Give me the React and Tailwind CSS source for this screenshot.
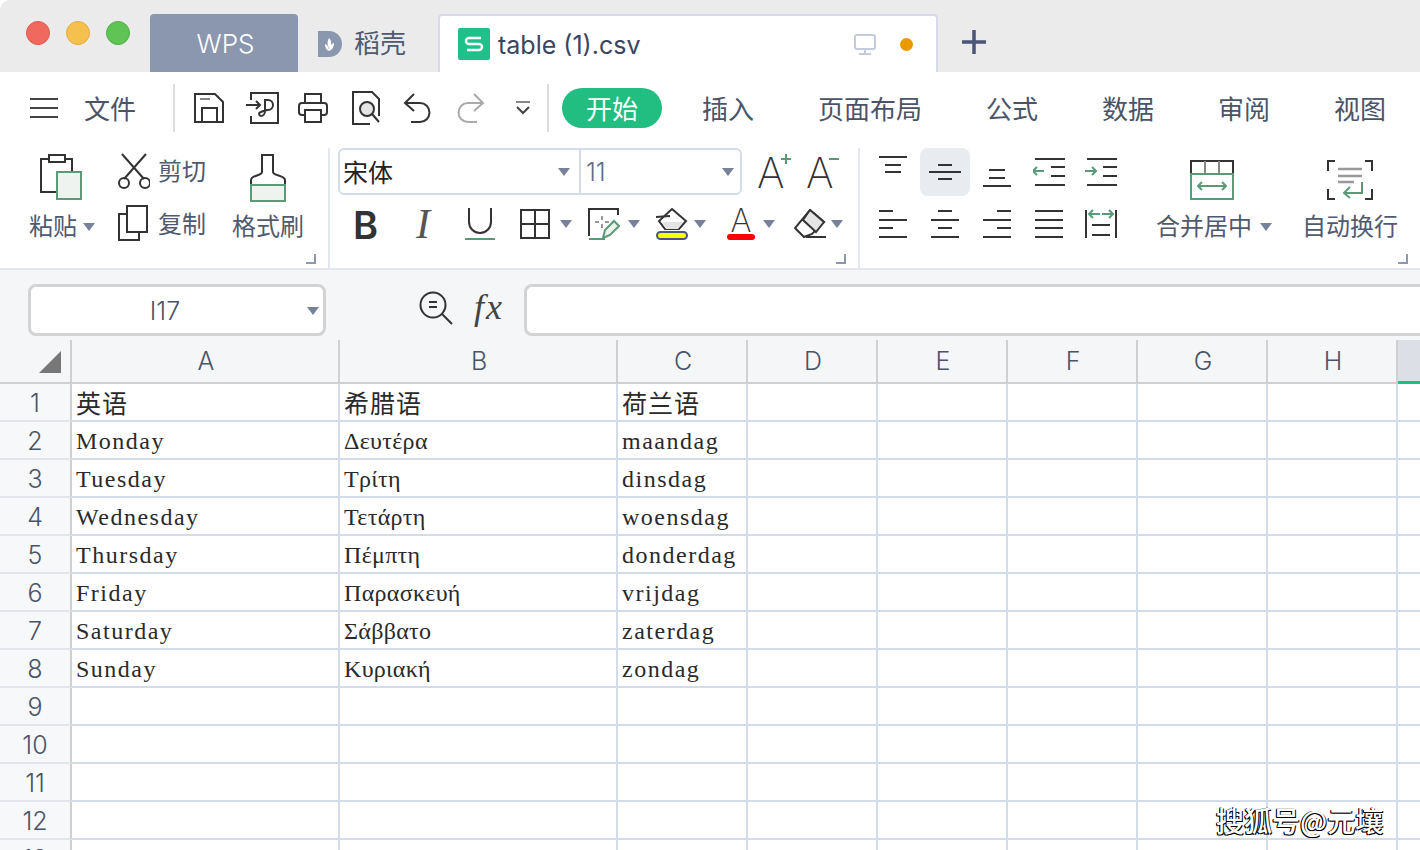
import React from 'react';

const SANS = "font-['Inter','Noto_Sans_CJK_SC',sans-serif]";
const DARK = '#333';
const GREEN = '#5a9a76';

const Ico = ({ w, h, className = '', children }) => (
  <svg width={w} height={h} viewBox={`0 0 ${w} ${h}`} fill="none" stroke={DARK} strokeWidth="2" className={`shrink-0 ${className}`}>
    {children}
  </svg>
);

const Caret = ({ className = '' }) => (
  <svg width="12" height="8" viewBox="0 0 12 8" className={`shrink-0 ${className}`}>
    <path d="M0 0h12L6 8z" fill="#77829a" />
  </svg>
);

const Corner = () => (
  <svg width="10" height="10" viewBox="0 0 10 10" fill="none" stroke="#8b97ae" strokeWidth="2" className="absolute right-[12px] bottom-[4px]">
    <path d="M9 0v9H0" />
  </svg>
);

// horizontal lines for the align icons: [x1, x2, y]
const Lines = ({ w, h, rows, children }) => (
  <Ico w={w} h={h}>
    {rows.map(([a, b, y], i) => (
      <path key={i} d={`M${a} ${y}H${b}`} />
    ))}
    {children}
  </Ico>
);

const TabLabel = ({ children }) => <span className="mt-[3px] text-[26px] leading-none text-[#4a5468]">{children}</span>;

const TitleBar = () => (
  <div className="flex h-[72px] items-end bg-[#ebebeb] rounded-tl-[10px]">
    <div className="flex h-[72px] w-[150px] items-center gap-[16px] pl-[26px] pb-[6px]">
      <span className="h-[24px] w-[24px] rounded-full border border-[#e0584e] bg-[#f0695e]" />
      <span className="h-[24px] w-[24px] rounded-full border border-[#e5ab3d] bg-[#f6c04f]" />
      <span className="h-[24px] w-[24px] rounded-full border border-[#4fb045] bg-[#5fc454]" />
    </div>
    <div className="flex h-[58px] w-[148px] items-center justify-center rounded-t-[4px] bg-[#8b97ae] pl-[3px] pt-[2px] text-[26px] font-light leading-none text-white">WPS</div>
    <div className="flex h-[58px] w-[140px] items-center gap-[12px] pl-[20px] pt-[1px]">
      <svg width="24" height="28" viewBox="0 0 24 28">
        <path d="M0 1h11a13 13 0 0 1 0 26H0z" fill="#8b97ae" />
        <path d="M11 8c3 3 3 7 0 10-2-3-2-7 0-10zM7 14c3 1 4 4 4 7-3-1-4-4-4-7zM16 13c0 4-2 7-5 8 0-4 2-7 5-8z" fill="#fff" />
      </svg>
      <span className="text-[26px] leading-none text-[#4f5a72]">稻壳</span>
    </div>
    <div className="flex h-[58px] w-[500px] items-center rounded-t-[4px] border-x-2 border-t-2 border-[#d5dbe8] border-b-0 bg-white pl-[18px]">
      <svg width="32" height="32" viewBox="0 0 32 32" className="shrink-0">
        <rect width="32" height="32" rx="2" fill="#1fc08a" />
        <path d="M23 10H11a3 3 0 0 0 0 6h10a3 3 0 0 1 0 6H9" fill="none" stroke="#fff" strokeWidth="2.4" />
      </svg>
      <span className="ml-[8px] mt-[2px] text-[25px] leading-none text-[#3b4560]">table (1).csv</span>
      <svg width="24" height="22" viewBox="0 0 24 22" fill="none" stroke="#c3cbdc" strokeWidth="2" className="ml-[213px] mt-[2px]">
        <rect x="2" y="1" width="20" height="14" rx="2" />
        <path d="M12 15v5M6 20h12" />
      </svg>
      <span className="ml-[23px] h-[13px] w-[13px] rounded-full bg-[#e89a00]" />
    </div>
    <svg width="26" height="26" viewBox="0 0 26 26" stroke="#4a5578" strokeWidth="3.5" className="ml-[23px] mb-[17px]">
      <path d="M13 1v24M1 13h24" />
    </svg>
  </div>
);

const MenuRow = () => (
  <div className="flex h-[63px] items-center bg-white pl-[30px] pt-[9px]">
    <Ico w={28} h={20} className="mr-[26px]">
      <path d="M0 1h28M0 10h28M0 19h28" stroke="#444" />
    </Ico>
    <TabLabel>文件</TabLabel>
    <div className="ml-[37px] mr-[19px] h-[48px] w-[2px] bg-[#dcdcdc]" />
    <div className="flex items-center">
      <Ico w={30} h={30}>
        <path d="M1 1h20l8 8v20H1z" />
        <path d="M6 6h10" stroke="#888" />
        <path d="M8 29V15h15v14" />
      </Ico>
      <Ico w={34} h={34} className="ml-[22px]">
        <path d="M5 9V2h27v30H5v-7" />
        <path d="M0 14h14M10 10l4 4-4 4" />
        <path d="M18 19h4a5 5 0 0 0 0-10h-3v11c0 3-2 5-4 5s-3-3 0-4c2-1 5-2 7-2" />
      </Ico>
      <Ico w={30} h={30} className="ml-[18px]">
        <path d="M7 10V1h16v9" />
        <path d="M7 22H4a3 3 0 0 1-3-3v-6a3 3 0 0 1 3-3h22a3 3 0 0 1 3 3v6a3 3 0 0 1-3 3h-3" />
        <rect x="7" y="17" width="16" height="12" />
      </Ico>
      <Ico w={30} h={34} className="ml-[23px]">
        <path d="M19 33H2V1h19l7 7v17" />
        <circle cx="16" cy="18" r="7" fill="#e4e4e4" />
        <path d="M21 23l7 8" />
      </Ico>
      <Ico w={28} h={30} className="ml-[22px]">
        <path d="M11 1L2 10l9 8" />
        <path d="M3 10h14a9 9 0 0 1 0 19H8" />
      </Ico>
      <Ico w={28} h={30} className="ml-[26px]">
        <path d="M17 1l9 9-9 8" stroke="#aaa" />
        <path d="M25 10H11a9 9 0 0 0 0 19h9" stroke="#aaa" />
      </Ico>
      <Ico w={16} h={14} className="ml-[30px]">
        <path d="M1 1h14" stroke="#888" />
        <path d="M2 6l6 6 6-6" stroke="#444" />
      </Ico>
    </div>
    <div className="ml-[16px] mr-[13px] h-[48px] w-[2px] bg-[#dcdcdc]" />
    <div className="flex h-[40px] w-[100px] items-center justify-center rounded-full bg-[#22bd80] pt-[3px] text-[26px] leading-none text-white">开始</div>
    <div className="ml-[40px] flex gap-[64px]">
      {['插入', '页面布局', '公式', '数据', '审阅', '视图'].map((t) => (
        <TabLabel key={t}>{t}</TabLabel>
      ))}
    </div>
  </div>
);

const Clipboard = () => (
  <Ico w={42} h={46} className="ml-[11px]">
    <path d="M28 38H1V5h31v13" />
    <rect x="9" y="1" width="16" height="7" fill="#fff" />
    <rect x="17" y="18" width="24" height="27" fill="#eef3f0" stroke={GREEN} />
  </Ico>
);

const ClipSection = () => (
  <div className="relative flex h-[120px] w-[330px] shrink-0 border-r-2 border-[#e4e7ee]">
    <div className="ml-[29px] mt-[6px] w-[67px]">
      <Clipboard />
      <div className="mt-[13px] flex items-center gap-[6px]">
        <span className="whitespace-nowrap text-[24px] leading-[28px] text-[#4f5a70]">粘贴</span>
        <Caret />
      </div>
    </div>
    <div className="ml-[22px] mt-[5px]">
      <div className="flex items-center gap-[8px]">
        <Ico w={32} h={36}>
          <path d="M4 1l22 25M28 1L6 26" />
          <circle cx="6" cy="30" r="5" />
          <circle cx="27" cy="30" r="5" />
        </Ico>
        <span className="mt-[2px] text-[24px] leading-none text-[#4f5a70]">剪切</span>
      </div>
      <div className="mt-[16px] flex items-center gap-[10px]">
        <Ico w={30} h={36}>
          <path d="M9 9H1v26h20v-8" />
          <rect x="9" y="1" width="20" height="26" fill="#fff" />
        </Ico>
        <span className="mt-[3px] text-[24px] leading-none text-[#4f5a70]">复制</span>
      </div>
    </div>
    <div className="ml-[26px] mt-[6px] flex flex-col items-center">
      <Ico w={36} h={48}>
        <path d="M12 1h11v17c0 4 12 3 12 8v6H1v-6c0-5 11-4 11-8z" />
        <rect x="1" y="31" width="34" height="16" fill="#eef3f0" stroke={GREEN} />
      </Ico>
      <span className="mt-[11px] whitespace-nowrap text-[24px] leading-[28px] text-[#4f5a70]">格式刷</span>
    </div>
    <Corner />
  </div>
);

const FontSection = () => (
  <div className="relative h-[120px] w-[530px] shrink-0 border-r-2 border-[#e4e7ee] pl-[8px]">
    <div className="flex items-center">
      <div className="flex h-[47px] w-[404px] rounded-[6px] border-2 border-[#d5dce9]">
        <div className="flex w-[241px] items-center border-r-2 border-[#d5dce9] pl-[3px] pr-[9px]">
          <span className="mt-[3px] flex-1 text-[25px] leading-none text-[#222]">宋体</span>
          <Caret />
        </div>
        <div className="flex flex-1 items-center pl-[5px] pr-[6px]">
          <span className="mt-[1px] flex-1 text-[25px] font-light leading-none text-[#5f6c88]">11</span>
          <Caret />
        </div>
      </div>
      <div className="relative ml-[15px] mt-[2px] w-[32px] text-[42px] font-extralight leading-none text-[#333]">
        A
        <svg width="10" height="10" viewBox="0 0 10 10" stroke={GREEN} strokeWidth="2" className="absolute left-[24px] top-[2px]">
          <path d="M5 0v10M0 5h10" />
        </svg>
      </div>
      <div className="relative ml-[17px] mt-[2px] w-[32px] text-[42px] font-extralight leading-none text-[#333]">
        A
        <svg width="10" height="2" viewBox="0 0 10 2" stroke={GREEN} strokeWidth="2" className="absolute left-[23px] top-[6px]">
          <path d="M0 1h10" />
        </svg>
      </div>
    </div>
    <div className="mt-[11px] flex h-[36px] items-center pl-[15px]">
      <span className="mt-[1px] w-[28px] text-[38px] font-semibold leading-none text-[#333]">B</span>
      <span className="ml-[35px] w-[17px] font-['Liberation_Serif',serif] text-[42px] italic leading-none text-[#555]">I</span>
      <Ico w={30} h={32} className="ml-[32px]">
        <path d="M4 0v14a11 11 0 0 0 22 0V0" />
        <path d="M0 31h30" stroke={GREEN} />
      </Ico>
      <Ico w={30} h={30} className="ml-[25px]">
        <rect x="1" y="1" width="28" height="28" />
        <path d="M15 1v28M1 15h28" />
      </Ico>
      <Caret className="ml-[10px]" />
      <svg width="32" height="32" viewBox="0 0 32 32" fill="none" strokeWidth="2" className="ml-[16px]">
        <path d="M1 28V1h29v6" stroke={DARK} />
        <path d="M14 8v4M14 16v4M7 14h4M17 14h4" stroke="#999" />
        <path d="M1 31h16" stroke={GREEN} />
        <path d="M15 30l2-8 9-9 5 5-9 9z" fill="#eef3f0" stroke={GREEN} />
      </svg>
      <Caret className="ml-[8px]" />
      <svg width="32" height="32" viewBox="0 0 32 32" fill="none" strokeWidth="2" className="ml-[16px]">
        <path d="M16 1L3 13l6 8h14l7-8z" stroke={DARK} />
        <path d="M0 9l14-1" stroke={DARK} />
        <path d="M6 14h21l-5 7H10z" fill="#e4e4e4" stroke="none" />
        <rect x="1" y="24" width="30" height="7" rx="3.5" fill="#ffff00" stroke="#4a5578" />
      </svg>
      <Caret className="ml-[6px]" />
      <div className="relative ml-[21px] h-[32px] w-[28px]">
        <span className="block text-center text-[32px] font-extralight leading-[26px] text-[#333]">A</span>
        <span className="absolute bottom-0 left-0 h-[6px] w-full rounded-full bg-[#f00]" />
      </div>
      <Caret className="ml-[8px]" />
      <svg width="32" height="30" viewBox="0 0 32 30" fill="none" stroke={DARK} strokeWidth="2" className="ml-[19px]">
        <path d="M16 1L30 13 18 25 10 28 1 19z" />
        <path d="M9 11l13 12L30 13 16 1z" fill="#e4e4e4" />
        <path d="M12 28h20" />
      </svg>
      <Caret className="ml-[5px]" />
    </div>
    <Corner />
  </div>
);

const ArrowL = ({ x, y }) => <path d={`M${x + 4} ${y - 4}l-4 4 4 4M${x} ${y}h11`} stroke={GREEN} />;
const ArrowR = ({ x, y }) => <path d={`M${x + 7} ${y - 4}l4 4-4 4M${x} ${y}h11`} stroke={GREEN} />;

const Cell = ({ active, children }) => (
  <div className={`flex h-[48px] w-[50px] items-center justify-center rounded-[8px] ${active ? 'bg-[#e8ebf0]' : ''}`}>{children}</div>
);

const AlignSection = () => (
  <div className="relative flex h-[120px] flex-1 pl-[8px]">
    <div className="grid h-[100px] grid-cols-[repeat(5,50px)] gap-x-[2px] gap-y-[4px]">
      <Cell><Lines w={28} h={32} rows={[[0, 28, 1], [6, 22, 9], [6, 22, 16]]} /></Cell>
      <Cell active><Lines w={32} h={18} rows={[[9, 23, 2], [0, 32, 9], [9, 23, 16]]} /></Cell>
      <Cell><Lines w={28} h={30} rows={[[6, 22, 13], [6, 22, 21], [0, 28, 29]]} /></Cell>
      <Cell>
        <Lines w={32} h={28} rows={[[2, 32, 1], [18, 32, 9], [18, 32, 18], [2, 32, 27]]}>
          <ArrowL x={0} y={13} />
        </Lines>
      </Cell>
      <Cell>
        <Lines w={32} h={28} rows={[[2, 32, 1], [18, 32, 9], [18, 32, 18], [2, 32, 27]]}>
          <ArrowR x={0} y={13} />
        </Lines>
      </Cell>
      <Cell><Lines w={28} h={28} rows={[[0, 14, 1], [0, 28, 10], [0, 14, 18], [0, 28, 27]]} /></Cell>
      <Cell><Lines w={28} h={28} rows={[[7, 21, 1], [0, 28, 10], [7, 21, 18], [0, 28, 27]]} /></Cell>
      <Cell><Lines w={28} h={28} rows={[[14, 28, 1], [0, 28, 10], [14, 28, 18], [0, 28, 27]]} /></Cell>
      <Cell><Lines w={28} h={28} rows={[[0, 28, 1], [0, 28, 10], [0, 28, 18], [0, 28, 27]]} /></Cell>
      <Cell>
        <Lines w={32} h={30} rows={[[7, 25, 16], [7, 25, 26]]}>
          <path d="M1 1v28M31 1v28" />
          <ArrowL x={4} y={5} />
          <ArrowR x={17} y={5} />
        </Lines>
      </Cell>
    </div>
    <div className="ml-[30px] mt-[12px] flex w-[120px] shrink-0 flex-col">
      <svg width="44" height="40" viewBox="0 0 44 40" fill="none" strokeWidth="2" className="ml-[34px]">
        <path d="M1 14V1h42v13" stroke={DARK} />
        <path d="M15 1v13M29 1v13" stroke="#888" />
        <rect x="1" y="14" width="42" height="25" stroke={GREEN} />
        <path d="M8 26h28M12 22l-4 4 4 4M32 22l4 4-4 4" stroke={GREEN} />
      </svg>
      <div className="mt-[13px] flex items-center gap-[8px]">
        <span className="whitespace-nowrap text-[24px] leading-[28px] text-[#4f5a70]">合并居中</span>
        <Caret />
      </div>
    </div>
    <div className="ml-[26px] mt-[12px] flex flex-col">
      <svg width="46" height="40" viewBox="0 0 46 40" fill="none" strokeWidth="2" className="ml-[25px]">
        <path d="M8 1H1v10M38 1h7v10M1 29v10h7M45 29v10h-7" stroke={DARK} />
        <path d="M11 9h24M11 16h24M11 22h16" stroke="#999" strokeWidth="2.4" />
        <path d="M35 22v11H17M23 27l-6 6 6 5" stroke={GREEN} />
      </svg>
      <span className="mt-[13px] whitespace-nowrap text-[24px] leading-[28px] text-[#4f5a70]">自动换行</span>
    </div>
    <Corner />
  </div>
);

const Ribbon = () => (
  <div className="flex h-[135px] border-b-2 border-[#e3e6ee] bg-white pt-[13px]">
    <ClipSection />
    <FontSection />
    <AlignSection />
  </div>
);

const FormulaBar = () => (
  <div className="flex h-[70px] items-start bg-[#f5f6f8] pl-[28px] pt-[14px]">
    <div className="relative flex h-[52px] w-[298px] items-center justify-center rounded-[8px] border-[3px] border-[#d3d3d3] bg-white">
      <span className="mr-[24px] mt-[2px] text-[25px] font-light leading-none text-[#4a5468]">I17</span>
      <Caret className="absolute right-[4px] top-[20px]" />
    </div>
    <svg width="34" height="34" viewBox="0 0 34 34" fill="none" stroke={DARK} strokeWidth="2" className="ml-[93px] mt-[7px]">
      <circle cx="14" cy="14" r="12.5" />
      <path d="M23 23l10 10M10 11h8M10 16h8" />
    </svg>
    <span className="ml-[21px] mt-[5px] font-['Liberation_Serif',serif] text-[36px] italic leading-none tracking-[2px] text-[#444]">fx</span>
    <div className="ml-[20px] h-[52px] flex-1 rounded-l-[8px] border-[3px] border-r-0 border-[#d3d3d3] bg-white" />
  </div>
);

const GRID = 'grid grid-cols-[72px_268px_278px_130px_130px_130px_130px_130px_130px_minmax(0,1fr)]';

const rows = [
  ['英语', '希腊语', '荷兰语'],
  ['Monday', 'Δευτέρα', 'maandag'],
  ['Tuesday', 'Τρίτη', 'dinsdag'],
  ['Wednesday', 'Τετάρτη', 'woensdag'],
  ['Thursday', 'Πέμπτη', 'donderdag'],
  ['Friday', 'Παρασκευή', 'vrijdag'],
  ['Saturday', 'Σάββατο', 'zaterdag'],
  ['Sunday', 'Κυριακή', 'zondag'],
  ['', '', ''],
  ['', '', ''],
  ['', '', ''],
  ['', '', ''],
  ['', '', ''],
];

const textClass = (i, j) => {
  if (i === 0) return 'pt-[4px] text-[25px] tracking-[1px]';
  if (j === 1) return 'pt-[2px] text-[24px] tracking-[0.3px]';
  return 'pt-[2px] text-[24px] tracking-[1.5px]';
};

const Sheet = () => (
  <div>
    <div className={`${GRID} h-[44px] bg-[#f5f6f8]`}>
      <div className="flex items-end justify-end border-r-2 border-b-2 border-[#d0d0d0] pb-[9px] pr-[9px]">
        <svg width="22" height="22" viewBox="0 0 22 22">
          <path d="M22 0v22H0z" fill="#777" />
        </svg>
      </div>
      {['A', 'B', 'C', 'D', 'E', 'F', 'G', 'H'].map((c) => (
        <div key={c} className="flex items-center justify-center border-r-2 border-b-2 border-[#d0d0d0] pl-[2px] text-[25px] font-light leading-none text-[#4a5468]">
          {c}
        </div>
      ))}
      <div className="border-b-[3px] border-[#22bd80] bg-[#dcdfe6]" />
    </div>
    {rows.map((row, i) => (
      <div key={i} className={`${GRID} h-[38px]`}>
        <div className="flex items-center justify-center border-r-2 border-b-2 border-r-[#d0d0d0] border-b-[#e3e5ea] bg-[#f7f8fa] pt-[2px] text-[25px] font-light leading-none text-[#4a5468]">
          {i + 1}
        </div>
        {row.map((text, j) => (
          <div key={j} className={`flex items-center overflow-hidden border-r-2 border-b-2 border-[#d5dce9] pl-[4px] font-['Liberation_Serif','Noto_Sans_CJK_SC',serif] leading-none text-[#2a2a2a] ${textClass(i, j)}`}>
            {text}
          </div>
        ))}
        {[0, 1, 2, 3, 4].map((k) => (
          <div key={k} className="border-r-2 border-b-2 border-[#d5dce9]" />
        ))}
        <div className="border-b-2 border-[#d5dce9]" />
      </div>
    ))}
  </div>
);

export default function App() {
  return (
    <div className={`relative h-[850px] w-full overflow-hidden bg-white ${SANS}`}>
      <TitleBar />
      <MenuRow />
      <Ribbon />
      <FormulaBar />
      <Sheet />
      <div className="absolute left-[1216px] top-[803px] whitespace-nowrap font-['Noto_Sans_CJK_SC',sans-serif] text-[28px] font-medium leading-[34px] text-white [text-shadow:-1px_1px_0_#000,-1px_0_0_#000,1px_1px_0_#000]">
        搜狐号@元壤
      </div>
    </div>
  );
}
